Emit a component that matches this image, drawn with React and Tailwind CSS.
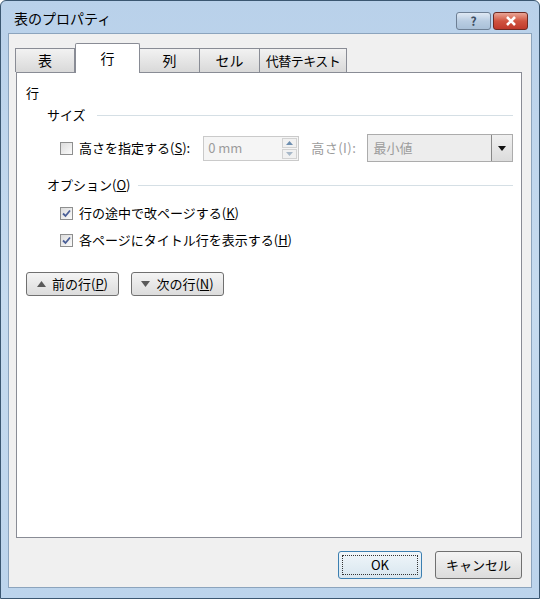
import React from 'react';

const font = { fontFamily: '"Noto Sans CJK JP", "Liberation Sans", sans-serif' };

const Check = ({ checked }) => (
    <span className="w-[13px] h-[13px] border border-[#8e8f8f] bg-gradient-to-br from-[#dcdcdc] to-[#fbfbfb] flex items-center justify-center shrink-0">
        {checked && (
            <svg width="9" height="9" viewBox="0 0 9 9">
                <path d="M1 4.5 L3.5 7 L8 1.5" fill="none" stroke="#4a5f97" strokeWidth="1.8" />
            </svg>
        )}
    </span>
);

const Tab = ({ label, active, w, tight }) => (
    <div
        className={
            active
                ? `${w} h-[30px] -mb-px bg-white border border-b-0 border-[#898c95] flex items-center justify-center text-[14px] text-black relative z-10 rounded-t-[2px]`
                : `${w} h-[24px] bg-gradient-to-b from-[#f2f2f2] to-[#d9d9d9] border border-b-0 border-[#898c95] -ml-px flex items-center justify-center text-black ${tight ? 'text-[13px] tracking-[-0.5px]' : 'text-[14px]'}`
        }
    >
        {label}
    </div>
);

const Group = ({ children, lineClass }) => (
    <div className="h-[18px] flex items-center pl-[30px] pr-[8px] text-[13px]">
        <span>{children}</span>
        <span className={`flex-1 h-px bg-[#d5dfe5] ${lineClass}`} />
    </div>
);

const NavButton = ({ up, children }) => (
    <button className="w-[93px] h-[24px] border border-[#707070] rounded-[3px] bg-gradient-to-b from-[#f4f4f4] to-[#dcdcdc] flex items-center justify-center gap-[6px] text-[13px] text-black">
        <svg width="9" height="6" viewBox="0 0 9 6">
            <path d={up ? 'M0 6 L4.5 0 L9 6 Z' : 'M0 0 L4.5 6 L9 0 Z'} fill="#5a5a5a" />
        </svg>
        <span>{children}</span>
    </button>
);

export default function App() {
    return (
        <div style={font} className="w-[540px] h-[599px] bg-gradient-to-b from-[#b9d1ea] via-[#c6dbef] to-[#bcd4ec] border border-[#3b5771] rounded-t-[6px] flex flex-col">
            <div className="h-[32px] flex items-center pl-[13px] pr-[11px]">
                <span className="text-[14px] text-black mt-[2px]">表のプロパティ</span>
                <div className="ml-auto flex gap-[2px] mt-[8px]">
                    <div className="w-[35px] h-[18px] rounded-[3px] border border-[#6d7f94] bg-gradient-to-b from-[#dfe9f4] via-[#b9cde2] to-[#a9c0d8] flex items-center justify-center text-[12px] font-bold text-[#3c4d62]">?</div>
                    <div className="w-[35px] h-[18px] rounded-[3px] border border-[#6e2a22] bg-gradient-to-b from-[#e8a596] via-[#d0533f] to-[#c0392b] flex items-center justify-center">
                        <svg width="12" height="10" viewBox="0 0 12 10">
                            <path d="M2 1 L10 9 M10 1 L2 9" stroke="#fff" strokeWidth="2.6" />
                        </svg>
                    </div>
                </div>
            </div>
            <div className="flex-1 mx-[7px] mb-[10px] bg-[#f0f0f0] border border-[#8ca4bd] flex flex-col pl-[7px] pr-[9px]">
                <div className="flex items-end pt-[9px]">
                    <Tab label="表" w="w-[60px]" />
                    <Tab label="行" w="w-[65px]" active />
                    <Tab label="列" w="w-[61px]" />
                    <Tab label="セル" w="w-[61px]" />
                    <Tab label="代替テキスト" w="w-[88px]" tight />
                </div>
                <div className="h-[466px] bg-white border border-[#898c95] flex flex-col pt-[11px] text-black">
                    <div className="h-[18px] flex items-center pl-[9px] text-[13px]">行</div>
                    <div className="mt-[4px]">
                        <Group lineClass="ml-[11px]">サイズ</Group>
                    </div>
                    <div className="mt-[10px] h-[28px] flex items-center pl-[43px] text-[13px]">
                        <Check />
                        <span className="ml-[6px]">高さを指定する(<u>S</u>):</span>
                        <div className="ml-[13px] w-[96px] h-[25px] border border-[#cacaca] bg-[#f5f5f5] flex items-center">
                            <span className="pl-[4px] text-[#9c9c9c] flex-1">0 mm</span>
                            <div className="w-[17px] h-full flex flex-col gap-px p-px">
                                <div className="flex-1 border border-[#d2d2d2] bg-[#f1f1f1] flex items-center justify-center">
                                    <svg width="7" height="4" viewBox="0 0 7 4"><path d="M0 4 L3.5 0 L7 4 Z" fill="#6e8fb0" /></svg>
                                </div>
                                <div className="flex-1 border border-[#d2d2d2] bg-[#f1f1f1] flex items-center justify-center">
                                    <svg width="7" height="4" viewBox="0 0 7 4"><path d="M0 0 L3.5 4 L7 0 Z" fill="#a8b8c8" /></svg>
                                </div>
                            </div>
                        </div>
                        <span className="ml-[12px] text-[#9c9c9c] tracking-[0.5px]">高さ(I):</span>
                        <div className="ml-[11px] w-[146px] h-[28px] border border-[#acacac] bg-[#ededed] flex items-center">
                            <span className="pl-[5px] text-[#9c9c9c] flex-1">最小値</span>
                            <div className="w-[21px] h-full border-l border-[#888] bg-gradient-to-b from-[#f0f0f0] to-[#dcdcdc] flex items-center justify-center">
                                <svg width="8" height="5" viewBox="0 0 8 5"><path d="M0 0 L4 5 L8 0 Z" fill="#111" /></svg>
                            </div>
                        </div>
                    </div>
                    <div className="mt-[14px]">
                        <Group lineClass="ml-[8px]">オプション(<u>O</u>)</Group>
                    </div>
                    <div className="mt-[10px] h-[18px] flex items-center pl-[43px] text-[13px]">
                        <Check checked />
                        <span className="ml-[6px]">行の途中で改ページする(<u>K</u>)</span>
                    </div>
                    <div className="mt-[9px] h-[18px] flex items-center pl-[43px] text-[13px]">
                        <Check checked />
                        <span className="ml-[6px]">各ページにタイトル行を表示する(<u>H</u>)</span>
                    </div>
                    <div className="mt-[23px] flex gap-[12px] pl-[9px]">
                        <NavButton up>前の行(<u>P</u>)</NavButton>
                        <NavButton>次の行(<u>N</u>)</NavButton>
                    </div>
                </div>
                <div className="flex justify-end gap-[13px] mt-[13px]">
                    <button className="w-[84px] h-[28px] border border-[#3c7fb1] rounded-[3px] bg-gradient-to-b from-[#f0f6fa] to-[#d8e6ef] p-[3px] text-[13px] text-black">
                        <span className="w-full h-full border border-dotted border-[#333] flex items-center justify-center">OK</span>
                    </button>
                    <button className="w-[87px] h-[28px] border border-[#707070] rounded-[3px] bg-gradient-to-b from-[#f4f4f4] to-[#dcdcdc] text-[13px] text-black">
                        キャンセル
                    </button>
                </div>
            </div>
        </div>
    );
}
